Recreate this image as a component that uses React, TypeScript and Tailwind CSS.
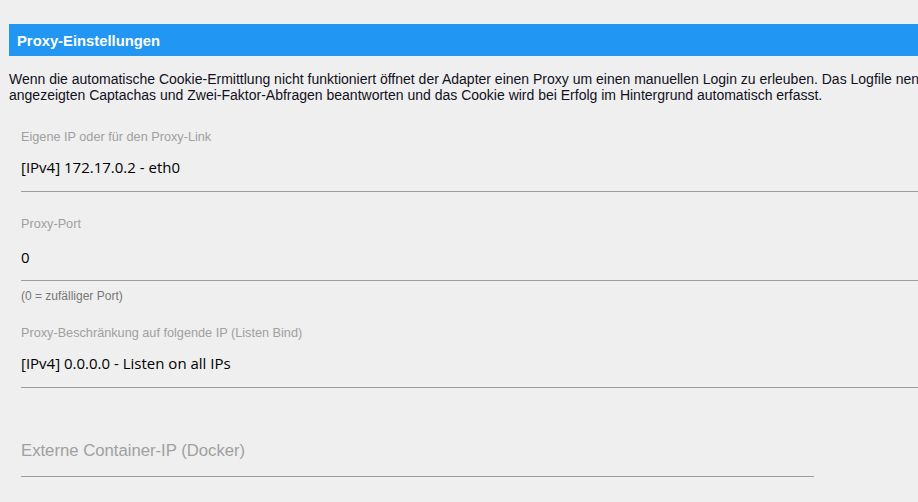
import * as React from "react"

const fields = [
  {
    label: "Eigene IP oder für den Proxy-Link",
    value: "[IPv4] 172.17.0.2 - eth0",
    pad: "pt-[13px] pb-[14px]",
    gap: "mt-[27px]",
  },
  {
    label: "Proxy-Port",
    value: "0",
    pad: "pt-[16px] pb-[13px]",
    gap: "mt-[25px]",
    help: "(0 = zufälliger Port)",
  },
  {
    label: "Proxy-Beschränkung auf folgende IP (Listen Bind)",
    value: "[IPv4] 0.0.0.0 - Listen on all IPs",
    pad: "pt-[13px] pb-[14px]",
    gap: "mt-[23px]",
  },
]

export default function App() {
  return (
    <div className="w-[918px] h-[502px] overflow-hidden bg-[#efefef] font-['Liberation_Sans',Arial,sans-serif] pt-[24px]">
      {/* Section header */}
      <div className="ml-[9px] w-[1000px] h-[32px] bg-[#2196f3] pl-[8px] pt-[1px] text-[14.8px] leading-[32px] font-bold text-white">
        Proxy-Einstellungen
      </div>

      {/* Description */}
      <div className="ml-[9px] mt-[15px] w-[1200px] text-[14px] leading-[16px] text-[#111122] whitespace-nowrap">
        <div>
          Wenn die automatische Cookie-Ermittlung nicht funktioniert öffnet der Adapter einen Proxy um einen manuellen Login zu erleuben. Das Logfile nennt die URL, dort die
        </div>
        <div>angezeigten Captachas und Zwei-Faktor-Abfragen beantworten und das Cookie wird bei Erfolg im Hintergrund automatisch erfasst.</div>
      </div>

      {/* Fields */}
      <div className="ml-[21px]">
        {fields.map((f, i) => (
          <div key={i} className={f.gap}>
            <div className="text-[12.7px] leading-[14px] text-[#a0a0a0] whitespace-nowrap">{f.label}</div>
            <div
              className={`w-[1000px] border-b border-[#9e9e9e] font-['Open_Sans',sans-serif] text-[15px] leading-[20px] text-black ${f.pad}`}
            >
              {f.value}
            </div>
            {f.help && (
              <div className="mt-[9px] text-[12px] leading-[13px] text-[#777777]">{f.help}</div>
            )}
          </div>
        ))}

        <div className="mt-[54px] w-[793px] border-b border-[#9e9e9e] pb-[16px] text-[16.7px] leading-[18px] text-[#a0a0a0]">
          Externe Container-IP (Docker)
        </div>
      </div>
    </div>
  )
}
